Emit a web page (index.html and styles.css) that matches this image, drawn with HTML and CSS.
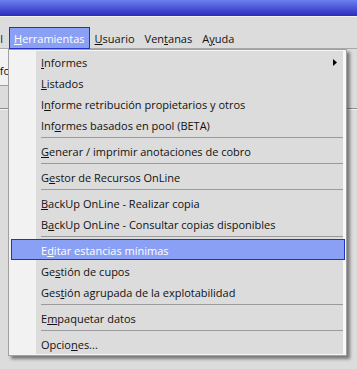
FILE: index.html
```html
<!Doctype html>
<html>
	<head>
		<title>Herramientas</title>
		<meta charset="utf-8">
		<link rel="stylesheet" href="styles.css">
	</head>
	<body>
		<div class="window">
			<div class="titlebar"></div>
			<div class="menubar">
				<span class="menubar-item cut"><span>General</span></span>
				<span class="menubar-item active"><u>H</u>erramientas</span>
				<span class="menubar-item"><u>U</u>suario</span>
				<span class="menubar-item">Ven<u>t</u>anas</span>
				<span class="menubar-item">A<u>y</u>uda</span>
			</div>
			<div class="workspace">
				<div class="panel"><span class="panel-text">Informes</span></div>
				<div class="rule"></div>
			</div>

			<div class="dropdown">
				<div class="menu-list">
					<div class="menu-item"><span><u>I</u>nformes</span>
						<svg class="submenu-arrow" width="4" height="7" viewBox="0 0 4 7"><path d="M0 0L4 3.5L0 7Z" fill="#000"/></svg>
					</div>
					<div class="menu-item"><span><u>L</u>istados</span></div>
					<div class="menu-item"><span>I<u>n</u>forme retribución propietarios y otros</span></div>
					<div class="menu-item"><span>Inf<u>o</u>rmes basados en pool (BETA)</span></div>
					<div class="separator"></div>
					<div class="menu-item"><span><u>G</u>enerar / imprimir anotaciones de cobro</span></div>
					<div class="separator"></div>
					<div class="menu-item"><span>G<u>e</u>stor de Recursos OnLine</span></div>
					<div class="separator"></div>
					<div class="menu-item"><span><u>B</u>ackUp OnLine - Realizar copia</span></div>
					<div class="menu-item"><span>B<u>a</u>ckUp OnLine - Consultar copias disponibles</span></div>
					<div class="separator"></div>
					<div class="menu-item selected"><span>E<u>d</u>itar estancias mínimas</span></div>
					<div class="menu-item"><span>Ge<u>s</u>tión de cupos</span></div>
					<div class="menu-item"><span>Ges<u>t</u>ión agrupada de la explotabilidad</span></div>
					<div class="separator"></div>
					<div class="menu-item"><span>E<u>m</u>paquetar datos</span></div>
					<div class="separator"></div>
					<div class="menu-item"><span>Opcio<u>n</u>es...</span></div>
				</div>
			</div>
		</div>
	</body>
</html>
```

FILE: styles.css
```css
* {box-sizing: border-box}
html, body { margin:0; padding:0; }
body {
	background-color:#dcdcdc;
	font-family:"Open Sans", "Noto Sans", sans-serif;
	font-size:11px;
	color:#111;
}
.window {
	position:relative;
	width:357px;
	height:369px;
	overflow:hidden;
	background-color:#dcdcdc;
}
.titlebar {
	height:16px;
	background:linear-gradient(#6c80f0, #2a2cbc);
}
.menubar {
	display:flex;
	align-items:flex-end;
	height:33px;
	border-top:1px solid #f2f2f2;
	border-bottom:1px solid #a8a8a8;
}
.menubar-item {
	display:flex;
	align-items:center;
	height:22px;
	margin-bottom:-1px;
	padding:0 4px;
	border:1px solid transparent;
	white-space:nowrap;
}
.menubar-item.cut {
	width:9px;
	padding:0 6px 0 0;
	border:none;
	justify-content:flex-end;
	overflow:hidden;
	color:#3a0820;
}
.menubar-item.active {
	background-color:#8aa0f4;
	border-color:#2232c4;
	color:#fff;
}
/* fondo de la ventana, casi todo tapado por el menu */
.workspace {
	display:flex;
	flex-direction:column;
}
.panel {
	height:37px;
	width:80px;
	display:flex;
	align-items:center;
	background-color:#f2f2f2;
	border-top:1px solid #fafafa;
	border-bottom:1px solid #a0a0a0;
}
.panel-text {
	margin-left:-10px;
	margin-top:5px;
}
.rule {
	margin-top:22px;
	height:2px;
	border-top:1px solid #8c8c8c;
	border-bottom:1px solid #f4f4f4;
}
.dropdown {
	position:absolute;
	left:8px;
	top:49px;
	width:339px;
	padding:1px 0;
	background-color:#f6f6f6;
	border:1px solid #a0a0a0;
	box-shadow:3px 3px 3px rgba(0,0,0,0.45);
}
.menu-list {
	display:flex;
	flex-direction:column;
	background:linear-gradient(to right, #f2f2f2 27px, #dcdcdc 27px, #dcdcdc calc(100% - 3px), #f8f8f8 calc(100% - 3px));
}
.menu-item {
	display:flex;
	align-items:center;
	height:21px;
	padding-left:32px;
	padding-top:1px;
	white-space:nowrap;
}
.menu-item.selected {
	margin:0 1px 0 2px;
	padding-left:29px;
	background-color:#8aa0f4;
	border:1px solid #2234c8;
	color:#fff;
}
.submenu-arrow {
	margin-left:auto;
	margin-right:9px;
}
.separator {
	height:5px;
	margin:0 3px 0 32px;
	background:linear-gradient(#9a9a9a, #9a9a9a) no-repeat 0 2px / 100% 1px;
}
```
